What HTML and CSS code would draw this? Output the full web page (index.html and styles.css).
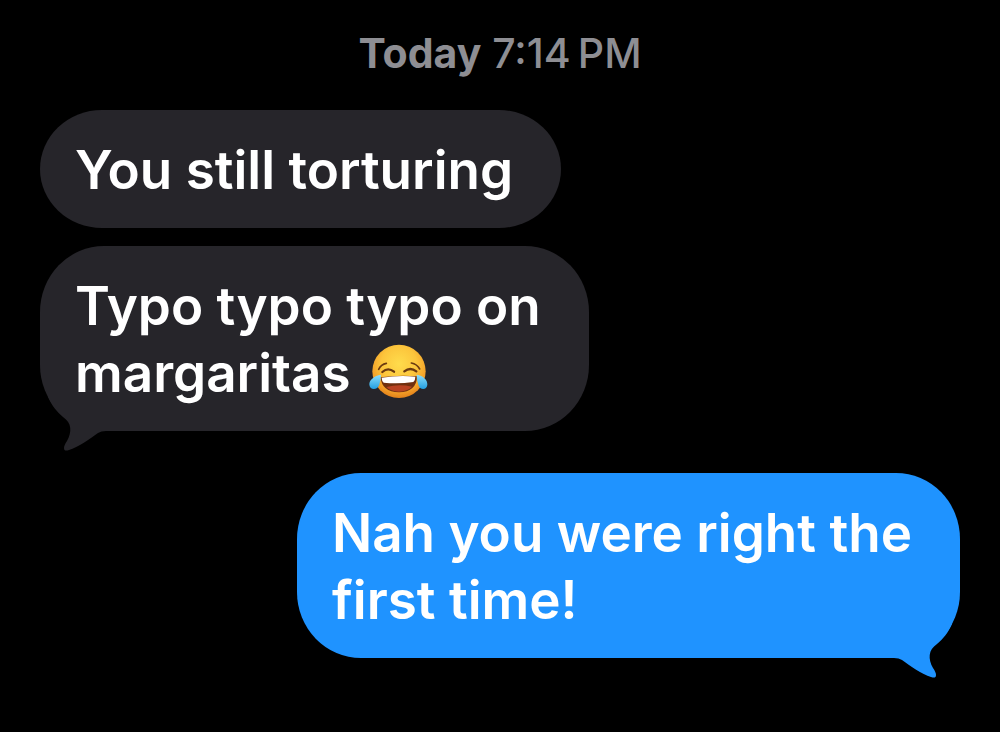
FILE: index.html
```html
<!DOCTYPE html>
<html lang="en">
<head>
<meta charset="utf-8">
<meta name="viewport" content="width=device-width, initial-scale=1">
<title>Messages</title>
<link rel="stylesheet" href="styles.css">
</head>
<body>
<main class="thread">
  <time class="stamp"><strong class="stamp-day">Today</strong> 7:14&#8201;PM</time>
  <p class="bubble incoming">You still torturing</p>
  <p class="bubble incoming tall">Typo typo typo on<br>margaritas
    <svg class="emoji" viewBox="24 27 180 168" role="img" aria-label="Face with tears of joy">
      <defs>
        <radialGradient id="face" cx="0.5" cy="0.36" r="0.66">
          <stop offset="0" stop-color="#ffdc4c"/>
          <stop offset="0.5" stop-color="#fcc53c"/>
          <stop offset="0.8" stop-color="#f3a028"/>
          <stop offset="1" stop-color="#e07c18"/>
        </radialGradient>
        <linearGradient id="tear" x1="0" y1="0" x2="0" y2="1">
          <stop offset="0" stop-color="#8fe0fb"/>
          <stop offset="1" stop-color="#239fe0"/>
        </linearGradient>
      </defs>
      <circle cx="117" cy="109" r="80" fill="url(#face)"/>
      <g fill="none" stroke="#6b3a10" stroke-linecap="round">
        <path d="M56 103Q63 88 79 85M154 84Q171 87 179 102" stroke-width="5"/>
        <path d="M67 111Q84 96 102 110M133 109Q151 95 169 109" stroke-width="7"/>
      </g>
      <path d="M62 127Q117 119 171 124Q170 171 117 172Q65 171 62 127Z" fill="#70300f"/>
      <path d="M65 128Q117 120 166 125Q166 137 160 141Q117 147 71 143Q65 138 65 128Z" fill="#fff"/>
      <path d="M79 156Q117 146 156 155Q143 169 117 170Q91 169 79 156Z" fill="#b84322"/>
      <path d="M63 119C43 122 27 135 28 149C29 166 53 166 58 149Q62 137 63 119Z" fill="url(#tear)"/>
      <path d="M170 119C190 122 203 135 202 149C201 166 179 166 175 149Q170 137 170 119Z" fill="url(#tear)"/>
    </svg>
    <svg class="tail" viewBox="0 0 80 80" aria-hidden="true"><path d="M72 26C68 35 63 41 57 46C48 52 48 61 53 70C55 73 56 75 56 77C56 80 54 80 51 79C42 76 30 68 22 62Q19 60 14 60H10V26Z"/></svg>
  </p>
  <p class="bubble outgoing tall">Nah you were right the<br>first time!
    <svg class="tail" viewBox="0 0 80 80" aria-hidden="true"><path d="M72 26C68 35 63 41 57 46C48 52 48 61 53 70C55 73 56 75 56 77C56 80 54 80 51 79C42 76 30 68 22 62Q19 60 14 60H10V26Z"/></svg>
  </p>
</main>
</body>
</html>
```
FILE: styles.css
```css
body {
  margin: 0;
  background: #000;
  color: #fff;
  font-family: Inter, "Liberation Sans", sans-serif;
}

.thread {
  display: flex;
  flex-direction: column;
  align-items: flex-start;
  padding: 28px 40px 40px;
}

.stamp {
  align-self: center;
  margin-bottom: 32px;
  color: #8e8e93;
  font-size: 41px;
  font-weight: 500;
  line-height: 50px;
}

.stamp-day {
  font-weight: 700;
}

.bubble {
  position: relative;
  isolation: isolate;
  margin: 0;
  padding: 27px 48px 24px 35px;
  border-radius: 62px / 59px;
  font-size: 53px;
  font-weight: 600;
  line-height: 67px;
}

.tall {
  border-radius: 64px / 66px;
}

.incoming {
  background: #26252a;
  fill: #26252a;
}

.outgoing {
  align-self: flex-end;
  margin-top: 42px;
  background: #1f93ff;
  fill: #1f93ff;
}

.incoming + .incoming {
  margin-top: 18px;
}

.emoji {
  width: 60px;
  height: 56px;
  margin-left: 4px;
  vertical-align: -8px;
}

.tail {
  position: absolute;
  z-index: -1;
  right: 0;
  bottom: -20px;
  width: 80px;
  height: 80px;
}

.incoming .tail {
  right: auto;
  left: 0;
  transform: scaleX(-1);
}
```
